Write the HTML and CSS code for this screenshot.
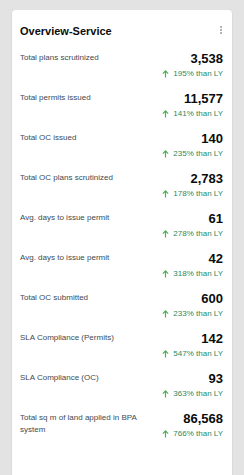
FILE: index.html
```html
<!DOCTYPE html>
<html lang="en">
<head>
  <meta charset="UTF-8" />
  <title>Overview-Service</title>
  <link rel="stylesheet" href="styles.css">
</head>
<body>
  <div class="card">
    <div class="card-header">
      <h2>Overview-Service</h2>
      <span class="menu"><i></i><i></i><i></i></span>
    </div>

    <div class="row">
      <div class="label">Total plans scrutinized</div>
      <div class="stat">
        <div class="value">3,538</div>
        <div class="trend"><svg viewBox="0 0 8 9"><path d="M4 8.5V1M1 4l3-3 3 3"/></svg>195% than LY</div>
      </div>
    </div>

    <div class="row">
      <div class="label">Total permits issued</div>
      <div class="stat">
        <div class="value">11,577</div>
        <div class="trend"><svg viewBox="0 0 8 9"><path d="M4 8.5V1M1 4l3-3 3 3"/></svg>141% than LY</div>
      </div>
    </div>

    <div class="row">
      <div class="label">Total OC issued</div>
      <div class="stat">
        <div class="value">140</div>
        <div class="trend"><svg viewBox="0 0 8 9"><path d="M4 8.5V1M1 4l3-3 3 3"/></svg>235% than LY</div>
      </div>
    </div>

    <div class="row">
      <div class="label">Total OC plans scrutinized</div>
      <div class="stat">
        <div class="value">2,783</div>
        <div class="trend"><svg viewBox="0 0 8 9"><path d="M4 8.5V1M1 4l3-3 3 3"/></svg>178% than LY</div>
      </div>
    </div>

    <div class="row">
      <div class="label">Avg. days to issue permit</div>
      <div class="stat">
        <div class="value">61</div>
        <div class="trend"><svg viewBox="0 0 8 9"><path d="M4 8.5V1M1 4l3-3 3 3"/></svg>278% than LY</div>
      </div>
    </div>

    <div class="row">
      <div class="label">Avg. days to issue permit</div>
      <div class="stat">
        <div class="value">42</div>
        <div class="trend"><svg viewBox="0 0 8 9"><path d="M4 8.5V1M1 4l3-3 3 3"/></svg>318% than LY</div>
      </div>
    </div>

    <div class="row">
      <div class="label">Total OC submitted</div>
      <div class="stat">
        <div class="value">600</div>
        <div class="trend"><svg viewBox="0 0 8 9"><path d="M4 8.5V1M1 4l3-3 3 3"/></svg>233% than LY</div>
      </div>
    </div>

    <div class="row">
      <div class="label">SLA Compliance (Permits)</div>
      <div class="stat">
        <div class="value">142</div>
        <div class="trend"><svg viewBox="0 0 8 9"><path d="M4 8.5V1M1 4l3-3 3 3"/></svg>547% than LY</div>
      </div>
    </div>

    <div class="row">
      <div class="label">SLA Compliance (OC)</div>
      <div class="stat">
        <div class="value">93</div>
        <div class="trend"><svg viewBox="0 0 8 9"><path d="M4 8.5V1M1 4l3-3 3 3"/></svg>363% than LY</div>
      </div>
    </div>

    <div class="row">
      <div class="label">Total sq m of land applied in BPA system</div>
      <div class="stat">
        <div class="value">86,568</div>
        <div class="trend"><svg viewBox="0 0 8 9"><path d="M4 8.5V1M1 4l3-3 3 3"/></svg>766% than LY</div>
      </div>
    </div>
  </div>
</body>
</html>
```

FILE: styles.css
```css
body {
  margin: 0;
  padding: 10px 12px 11px;
  background-color: #e3e3e3;
  font-family: "Liberation Sans", Arial, sans-serif;
}

.card {
  background: white;
  border-radius: 4px;
  box-shadow: 0 1px 2px rgba(0, 0, 0, 0.12);
  padding: 14px 9px 27px 8px;
  min-height: 412px;
  box-sizing: content-box;
}

.card-header {
  display: flex;
  justify-content: space-between;
  align-items: flex-start;
  margin-bottom: 13px;
}

h2 {
  margin: 0;
  font-size: 11px;
  font-weight: bold;
  color: #0b0c0c;
  line-height: 15px;
}

.menu {
  display: flex;
  flex-direction: column;
  gap: 1px;
  margin-top: 2px;
  margin-right: 1px;
}

.menu i {
  width: 2px;
  height: 2px;
  background: #b1b4b6;
}

.row {
  display: flex;
  justify-content: space-between;
  align-items: flex-start;
  height: 40px;
}

.label {
  font-size: 8px;
  color: #3d4a52;
  line-height: 12px;
  max-width: 132px;
}

.stat {
  text-align: right;
}

.value {
  font-size: 13px;
  font-weight: bold;
  color: #0b0c0c;
  line-height: 14px;
}

.trend {
  display: flex;
  align-items: center;
  justify-content: flex-end;
  gap: 4px;
  margin-top: 3px;
  font-size: 8px;
  color: #1f8a62;
}

.trend svg {
  width: 7px;
  height: 8px;
  fill: none;
  stroke: #4caf50;
  stroke-width: 1.4;
}
```
